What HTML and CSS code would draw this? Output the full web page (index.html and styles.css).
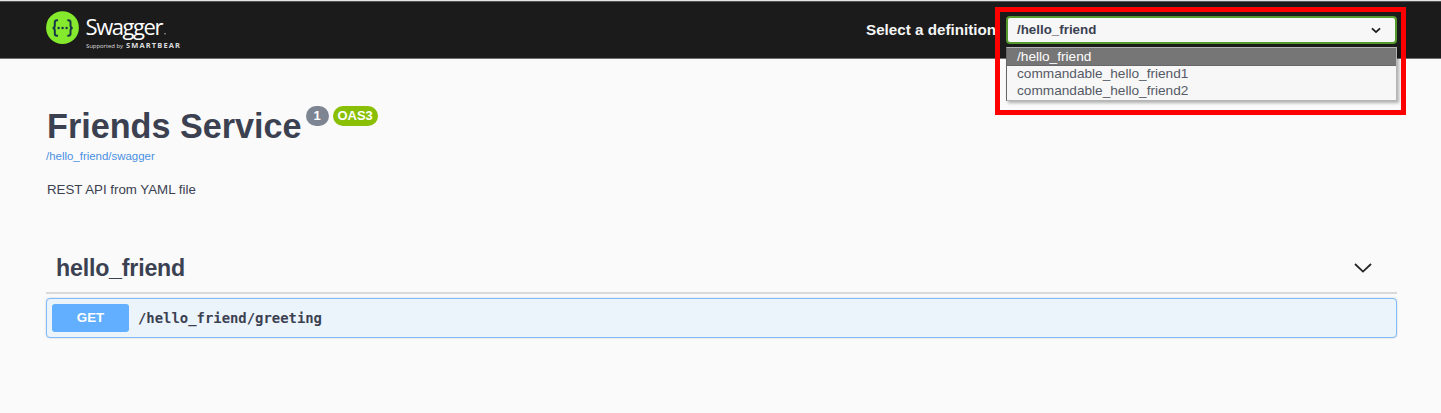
FILE: index.html
```html
<!DOCTYPE html>
<html lang="en">
<head>
<meta charset="utf-8">
<title>Friends Service</title>
<link rel="stylesheet" href="styles.css">
</head>
<body>
<header class="topbar">
  <svg class="logo" width="140" height="42" viewBox="0 0 140 42" role="img" aria-label="Swagger, supported by SmartBear">
    <circle cx="16.5" cy="17.7" r="16.4" fill="#85ea2d"/>
    <g fill="none" stroke="#173647" stroke-width="2">
      <path d="M12 10.3h-1q-2.2 0-2.2 2.2v3q0 2.5-2.2 2.5q2.2 0 2.2 2.5v3q0 2.2 2.2 2.2h1"/>
      <path d="M21.3 10.3h1q2.2 0 2.2 2.2v3q0 2.5 2.2 2.5q-2.2 0-2.2 2.5v3q0 2.2-2.2 2.2h-1"/>
    </g>
    <g fill="#173647"><circle cx="12.6" cy="18" r="1.2"/><circle cx="16.6" cy="18" r="1.2"/><circle cx="20.6" cy="18" r="1.2"/></g>
    <text class="logo-name" x="39.5" y="25" textLength="78">Swagger</text>
    <circle cx="119" cy="23.7" r=".8" fill="#aaa"/>
    <text class="logo-by" x="40" y="37.5" textLength="37">Supported by</text>
    <text class="logo-brand" x="80" y="37.5" textLength="54">SMARTBEAR</text>
  </svg>
  <span class="select-label">Select a definition</span>
  <div class="picker">
    <div class="select">
      <span>/hello_friend</span>
      <svg width="10" height="7" viewBox="0 0 10 7"><path d="M1 1.3l4 3.8 4-3.8" fill="none" stroke="#1b1b1b" stroke-width="1.8"/></svg>
    </div>
    <ul class="options">
      <li class="active">/hello_friend</li>
      <li>commandable_hello_friend1</li>
      <li>commandable_hello_friend2</li>
    </ul>
    <div class="highlight"></div>
  </div>
</header>
<main class="content">
  <div class="title-row">
    <h1>Friends Service</h1>
    <span class="badge version">1</span>
    <span class="badge oas">OAS3</span>
  </div>
  <a class="spec-link">/hello_friend/swagger</a>
  <p class="description">REST API from YAML file</p>
  <section>
    <div class="tag">
      <h2>hello_friend</h2>
      <svg width="18" height="10" viewBox="0 0 18 10"><path d="M1 1l8 7.6L17 1" fill="none" stroke="#252525" stroke-width="1.8"/></svg>
    </div>
    <div class="operation">
      <span class="method">GET</span>
      <span class="path">/hello_friend/greeting</span>
    </div>
  </section>
</main>
</body>
</html>
```

FILE: styles.css
```css
* { box-sizing: border-box; }
body {
  margin: 0;
  height: 413px;
  overflow: hidden;
  background: #fafafa;
  color: #3b4151;
  font-family: "Liberation Sans", Arial, sans-serif;
}
h1, h2, p, ul { margin: 0; padding: 0; }
.topbar {
  display: flex;
  align-items: flex-start;
  height: 59px;
  padding: 9px 45px 0 46px;
  background: #1b1b1b;
  border-top: 1px solid #e4e4e4;
  border-bottom: 1px solid #707070;
  box-shadow: inset 0 1px #555;
}
.logo { display: block; }
.logo-name { font: 22px "Open Sans", sans-serif; fill: #fff; }
.logo-by { font: 6px "Open Sans", sans-serif; fill: #ddd; }
.logo-brand { font: bold 7.5px "Open Sans", sans-serif; fill: #ddd; }
.select-label {
  margin: 11px 10px 0 auto;
  font-size: 15.2px;
  font-weight: bold;
  line-height: 18px;
  color: #f5f5f5;
  white-space: nowrap;
}
.picker { position: relative; width: 391px; margin: 6px -1px 0 0; }
.select {
  display: flex;
  align-items: center;
  justify-content: space-between;
  height: 28px;
  padding: 0 14px 0 9px;
  border: 2px solid #549a2c;
  border-radius: 4px;
  background: #f7f7f7;
  font-size: 13.35px;
  font-weight: bold;
}
.select span { padding-bottom: 2px; }
.options {
  position: absolute;
  top: 31px;
  left: 0;
  width: 391px;
  height: 54px;
  border: 1px solid #b5b5b5;
  border-left-color: #666;
  background: #f7f7f7;
  box-shadow: 2px 2px 3px rgba(0, 0, 0, .3);
  list-style: none;
  font-size: 13.65px;
  color: #555a66;
}
.options li { height: 17px; padding-left: 10px; line-height: 15px; }
.options .active { height: 18px; line-height: 17px; background: #767676; color: #fff; border-bottom: 1px solid #686868; }
.highlight {
  position: absolute;
  top: -9px;
  left: -11px;
  width: 411px;
  height: 108px;
  border: 5px solid #f00;
}
.content { padding: 45px 44px 0 46px; }
.title-row { display: flex; align-items: flex-start; height: 44px; }
h1 { font-size: 34.2px; line-height: 44px; margin: 0 4px 0 1px; white-space: nowrap; }
.badge {
  height: 20px;
  margin: 2px 4px 0 0;
  border-radius: 10px;
  color: #fff;
  font-size: 13px;
  font-weight: bold;
  line-height: 19px;
  text-align: center;
}
.version { width: 23px; background: #7d8492; }
.oas { width: 45px; background: #89bf04; }
.spec-link { display: block; height: 16px; font-size: 11.45px; line-height: 16px; color: #4990e2; }
.description { margin-top: 17px; padding-left: 1px; font-size: 13.3px; line-height: 18px; }
.tag {
  display: flex;
  align-items: center;
  justify-content: space-between;
  height: 50px;
  margin-top: 45px;
  padding: 0 25px 0 10px;
  border-bottom: 2px solid #d8d9db;
}
h2 { font-size: 23.2px; line-height: 28px; letter-spacing: -.2px; }
.operation {
  display: flex;
  align-items: center;
  height: 40px;
  margin-top: 4px;
  padding: 0 5px;
  border: 1px solid #7dbcff;
  border-radius: 4px;
  background: #ebf3fb;
  box-shadow: 0 0 2px rgba(0, 0, 0, .2);
}
.method {
  width: 77px;
  height: 28px;
  border-radius: 3px;
  background: #61affe;
  color: #fff;
  font-size: 13.3px;
  font-weight: bold;
  line-height: 28px;
  text-align: center;
}
.path { margin-left: 9px; font: bold 13.9px "DejaVu Sans Mono", monospace; }
```
